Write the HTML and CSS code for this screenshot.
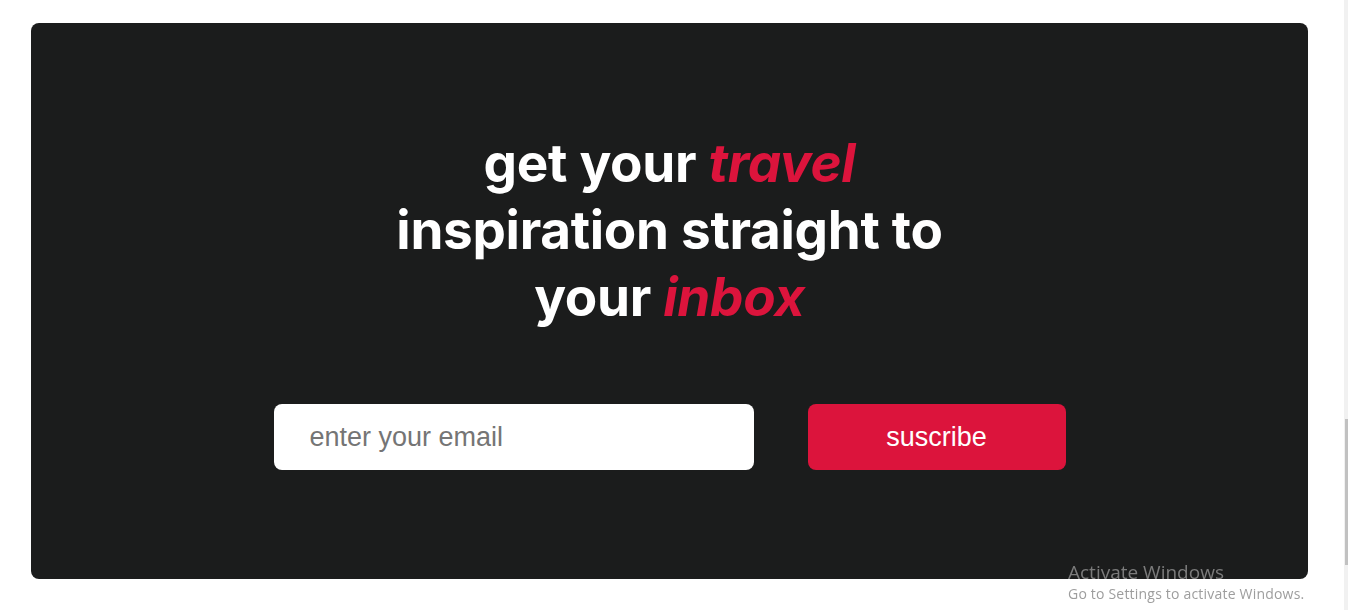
FILE: index.html
```html
<!DOCTYPE html>
<html lang="en">
<head>
<meta charset="utf-8">
<title>Newsletter</title>
<link rel="stylesheet" href="styles.css">
</head>
<body>
<main class="page">
  <section class="newsletter">
    <h2 class="newsletter-title">get your <em class="accent">travel</em><br>inspiration straight to<br>your <em class="accent">inbox</em></h2>
    <form class="newsletter-form">
      <input class="email-input" type="email" placeholder="enter your email">
      <button class="subscribe-btn" type="button">suscribe</button>
    </form>
  </section>
</main>
<div class="scrollbar"><div class="scrollbar-thumb"></div></div>
<div class="watermark">
  <div class="watermark-title">Activate Windows</div>
  <div class="watermark-sub">Go to Settings to activate Windows.</div>
</div>
</body>
</html>
```
FILE: styles.css
```css
html, body {
  margin: 0;
  padding: 0;
  background: #ffffff;
  overflow: hidden;
}
.page {
  padding: 23px 40px 0 31px;
}
.newsletter {
  background: #1b1c1c;
  border-radius: 8px;
  height: 556px;
  box-sizing: border-box;
  padding-top: 107px;
  display: flex;
  flex-direction: column;
  align-items: center;
}
.newsletter-title {
  margin: 0;
  font-family: Inter, "Noto Sans", sans-serif;
  font-weight: 700;
  font-size: 53px;
  line-height: 67px;
  color: #ffffff;
  text-align: center;
  letter-spacing: -0.3px;
}
.accent {
  color: #dc143c;
  font-style: italic;
}
.newsletter-form {
  margin-top: 73px;
  display: flex;
  gap: 54px;
}
.email-input {
  width: 480px;
  height: 66px;
  box-sizing: border-box;
  border: none;
  border-radius: 8px;
  padding: 0 36px;
  font-family: "Liberation Sans", Arial, sans-serif;
  font-size: 27px;
  color: #333;
  background: #fff;
  outline: none;
}
.email-input::placeholder {
  color: #757575;
}
.subscribe-btn {
  width: 258px;
  height: 66px;
  border: none;
  border-radius: 8px;
  background: #dc143c;
  color: #ffffff;
  font-family: "Liberation Sans", Arial, sans-serif;
  font-size: 27px;
  cursor: pointer;
}
.scrollbar {
  position: fixed;
  top: 0;
  right: 0;
  width: 4px;
  height: 100%;
  background: #f1f1f1;
}
.scrollbar-thumb {
  position: absolute;
  top: 419px;
  left: 1px;
  width: 3px;
  height: 146px;
  background: #c1c1c1;
}
.watermark {
  position: fixed;
  left: 1068px;
  top: 560px;
  font-family: "Open Sans", "Noto Sans", sans-serif;
  color: rgba(140, 140, 140, 0.85);
  pointer-events: none;
}
.watermark-title {
  font-size: 19px;
  line-height: 24px;
}
.watermark-sub {
  font-size: 14px;
  line-height: 20px;
  letter-spacing: 0.2px;
}
```
